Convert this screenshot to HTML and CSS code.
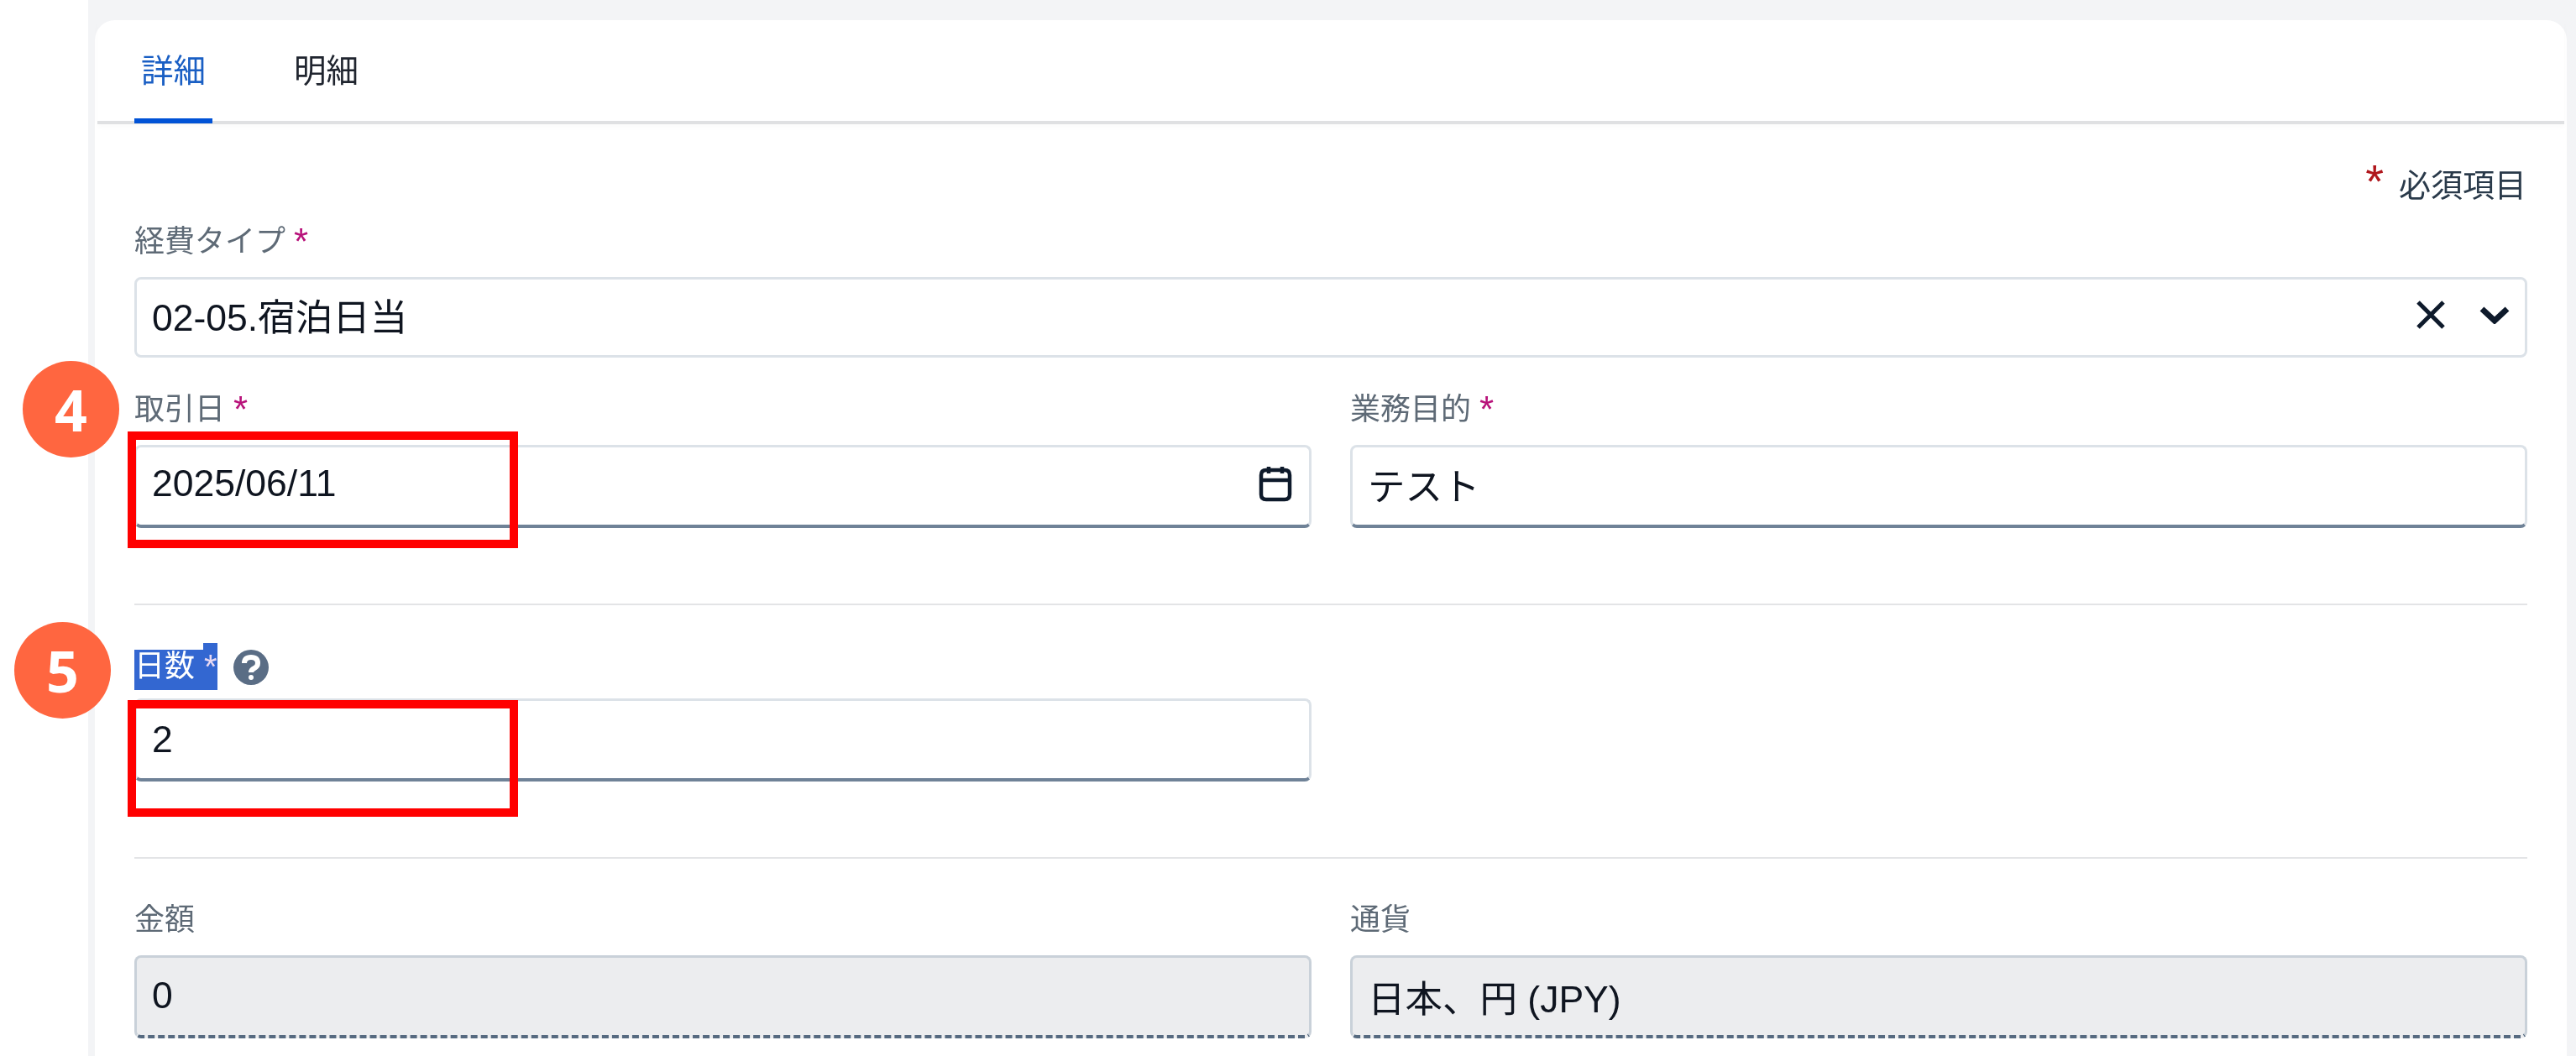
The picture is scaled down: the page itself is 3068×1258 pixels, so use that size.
FILE: index.html
```html
<!DOCTYPE html>
<html lang="ja">
<head>
    <meta charset="UTF-8">
    <meta name="viewport" content="width=device-width, initial-scale=1.0">
    <title>経費 詳細</title>
    <link rel="stylesheet" href="styles.css">
</head>
<body>
    <div class="sidebar"></div>
    <div class="main">
        <div class="card">
            <div class="tabs">
                <div class="tab active">詳細</div>
                <div class="tab">明細</div>
            </div>
            <div class="form">
                <div class="required-note"><span class="note-star">*</span>必須項目</div>

                <div class="field field-type">
                    <div class="label">経費タイプ <span class="star">*</span></div>
                    <div class="input input-plain">
                        <span class="value">02-05.宿泊日当</span>
                        <svg class="icon-close" viewBox="0 0 36 36"><path d="M3 3 L33 33 M33 3 L3 33"/></svg>
                        <svg class="icon-chevron" viewBox="0 0 36 22"><path d="M3 4 L18 18 L33 4"/></svg>
                    </div>
                </div>

                <div class="row row-date">
                    <div class="field">
                        <div class="label">取引日 <span class="star">*</span></div>
                        <div class="input">
                            <span class="value">2025/06/11</span>
                            <svg class="icon-calendar" viewBox="0 0 40 44"><path d="M9 6 H31 Q37 6 37 12 V35 Q37 41 31 41 H9 Q3 41 3 35 V12 Q3 6 9 6 Z M3 18 H37 M12 2 V10 M28 2 V10"/></svg>
                        </div>
                    </div>
                    <div class="field">
                        <div class="label">業務目的 <span class="star">*</span></div>
                        <div class="input"><span class="value">テスト</span></div>
                    </div>
                </div>

                <hr class="divider">

                <div class="row row-days">
                    <div class="field">
                        <div class="label label-help">
                            <span class="selected">日数</span><span class="selected selected-star">*</span>
                            <svg class="icon-help" viewBox="0 0 44 44"><circle cx="22" cy="22" r="21"/><path class="mark" d="M14 17 Q14 10 22 10 Q30 10 30 17 Q30 21 26 23 Q22 25 22 28"/><circle class="dot" cx="22" cy="34" r="3"/></svg>
                        </div>
                        <div class="input input-low"><span class="value">2</span></div>
                    </div>
                </div>

                <hr class="divider divider-last">

                <div class="row">
                    <div class="field">
                        <div class="label">金額</div>
                        <div class="input readonly"><span class="value">0</span></div>
                    </div>
                    <div class="field">
                        <div class="label">通貨</div>
                        <div class="input readonly"><span class="value">日本、円 (JPY)</span></div>
                    </div>
                </div>
            </div>
        </div>
    </div>

    <!-- annotations on top of the screenshot -->
    <div class="step step-4">4</div>
    <div class="step step-5">5</div>
    <div class="red-box box-date"></div>
    <div class="red-box box-days"></div>
</body>
</html>
```
FILE: styles.css
```css
html, body {
    height: 100%;
}
body {
    margin: 0;
    display: flex;
    height: 1258px;
    overflow: hidden;
    position: relative;
    background: #fff;
    font-family: "Liberation Sans", "Noto Sans CJK JP", sans-serif;
    color: #0f1520;
}
.sidebar {
    width: 105px;
    flex: none;
    background: #fff;
}
.main {
    flex: 1;
    background: #f3f4f6;
    padding: 24px 11px 0 8px;
}
.card {
    height: 100%;
    background: #fff;
    border-radius: 24px 24px 0 0;
    filter: blur(0.7px);
}
.tabs {
    display: flex;
    gap: 89px;
    height: 120px;
    margin: 0 3px;
    padding-left: 44px;
    border-bottom: 4px solid #dfe0e2;
    box-shadow: 0 4px 6px rgba(0, 0, 0, 0.02);
}
.tab {
    height: 123px;
    box-sizing: border-box;
    padding: 36px 8px 0;
    font-size: 38.5px;
    line-height: 50px;
    color: #20252f;
}
.tab.active {
    color: #1a5fc4;
    border-bottom: 6px solid #0052d6;
}
.form {
    padding: 42px 47px 0;
}
.required-note {
    display: flex;
    justify-content: flex-end;
    height: 60px;
    line-height: 62px;
    font-size: 38px;
    padding-right: 1px;
    color: #2a3a4a;
}
.note-star {
    font-size: 56px;
    line-height: 60px;
    color: #b0161c;
    margin-right: 18px;
    margin-top: -4px;
}
.field-type {
    margin-top: 16px;
}
.label {
    height: 46px;
    line-height: 43px;
    margin-bottom: 18px;
    font-size: 36px;
    color: #5e6a76;
    white-space: nowrap;
}
.star {
    color: #b8127a;
    font-size: 44px;
    vertical-align: -3px;
}
.input {
    display: flex;
    align-items: center;
    box-sizing: border-box;
    height: 99px;
    padding: 0 18px 6px;
    background: #fff;
    border: 3px solid #dce2e8;
    border-bottom: 4px solid #6f8297;
    border-radius: 8px;
}
.input-plain {
    height: 96px;
    padding-bottom: 7px;
    border-bottom: 3px solid #dce2e8;
}
.input-low {
    padding-bottom: 0;
}
.value {
    flex: 1;
    font-size: 44.5px;
}
.readonly {
    padding-bottom: 2px;
    background: #ecedef;
    border-color: #c9d1d9;
    border-bottom: 4px dashed #566a80;
}
.row {
    display: grid;
    grid-template-columns: 1402px 1402px;
    gap: 46px;
}
.row-date {
    margin-top: 40px;
}
.divider {
    margin: 90px 0 47px;
    border: none;
    height: 2px;
    background: #e3e4e6;
}
.divider-last {
    margin-bottom: 51px;
}

/* the label that was selected when the screenshot was taken */
.label-help {
    display: flex;
    align-items: flex-start;
}
.selected {
    display: block;
    height: 48px;
    margin-top: 6px;
    padding-right: 10px;
    line-height: 40px;
    background: #3367d1;
    color: #fff;
}
.selected-star {
    width: 17px;
    height: 56px;
    margin-top: -2px;
    padding-right: 0;
    font-size: 40px;
    line-height: 56px;
    text-indent: 1px;
    color: #e8d9f2;
}
.icon-close,
.icon-chevron,
.icon-calendar {
    flex: none;
    fill: none;
    stroke: #0e1a2b;
}
.icon-close {
    width: 36px;
    height: 36px;
    stroke-width: 5;
}
.icon-chevron {
    width: 36px;
    height: 22px;
    margin: 0 0 0 40px;
    stroke-width: 7;
}
.icon-calendar {
    width: 40px;
    height: 44px;
    margin-right: 2px;
    stroke-width: 4.5;
}
.icon-help {
    width: 44px;
    height: 44px;
    margin-left: 18px;
    margin-top: 5px;
}
.icon-help circle {
    fill: #5a6d85;
}
.icon-help .mark {
    fill: none;
    stroke: #fff;
    stroke-width: 6;
}
.icon-help .dot {
    fill: #fff;
}

/* numbered circles and red frames */
.step {
    position: absolute;
    width: 115px;
    height: 115px;
    border-radius: 50%;
    background: #ff6640;
    color: #fff;
    font-family: "Noto Sans", sans-serif;
    font-weight: 700;
    font-size: 68px;
    line-height: 115px;
    text-align: center;
}
.step-4 {
    left: 27px;
    top: 430px;
}
.step-5 {
    left: 17px;
    top: 741px;
}
.red-box {
    position: absolute;
    left: 152px;
    width: 465px;
    height: 139px;
    box-sizing: border-box;
    border: 10px solid #ff0000;
}
.box-date {
    top: 514px;
}
.box-days {
    top: 834px;
}
```
